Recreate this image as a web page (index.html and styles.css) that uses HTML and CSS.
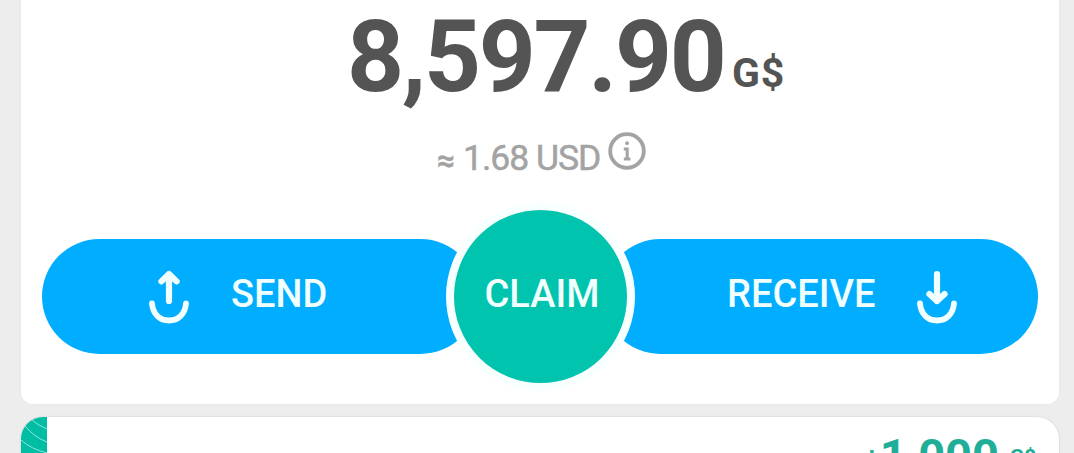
FILE: index.html
```html
<!DOCTYPE html>
<html lang="en">
<head>
<meta charset="utf-8">
<title>Wallet</title>
<link rel="stylesheet" href="styles.css">
</head>
<body>
<main class="wallet">
  <section class="balance-card">
    <div class="balance"><span class="amount">8,597.90</span><span class="unit">G$</span></div>
    <div class="fiat">
      <span class="approx">≈</span><span class="fiat-value">1.68 USD</span>
      <svg class="info" viewBox="0 0 38 38" fill="none" stroke="currentColor">
        <circle cx="19" cy="19" r="16.8" stroke-width="3.8"/>
        <circle cx="19" cy="11.2" r="1.9" fill="currentColor" stroke="none"/>
        <path d="M15.8 17H19.2V26.8M15.8 27H22.4" stroke-width="3"/>
      </svg>
    </div>
    <div class="actions">
      <button class="action send">
        <svg class="arrow" viewBox="0 0 40 54" fill="none" stroke="currentColor" stroke-linecap="round" stroke-linejoin="round">
          <path d="M20 31V5M12.4 11.4L20 4L27.6 11.4" stroke-width="6.2"/>
          <path d="M3 33.5C4 44.5 11 50.5 20 50.5S36 44.5 37 33.5" stroke-width="5.8"/>
        </svg>
        <span>SEND</span>
      </button>
      <button class="claim">CLAIM</button>
      <button class="action receive">
        <span>RECEIVE</span>
        <svg class="arrow" viewBox="0 0 40 54" fill="none" stroke="currentColor" stroke-linecap="round" stroke-linejoin="round">
          <path d="M20 4V31M12.4 24L20 31L27.6 24" stroke-width="6.2"/>
          <path d="M3 33.5C4 44.5 11 50.5 20 50.5S36 44.5 37 33.5" stroke-width="5.8"/>
        </svg>
      </button>
    </div>
  </section>
  <section class="feed-card">
    <svg class="stripe" viewBox="0 0 26 36" fill="none" stroke="#8ce8d8" stroke-width="1">
      <path d="M10 2Q16 8 26 12M4 9Q13 20 26 25M0 23Q10 32 26 36"/>
    </svg>
    <div class="feed-amount"><span class="plus">+</span><span class="feed-value">1,000</span><span class="feed-unit">G$</span></div>
  </section>
</main>
</body>
</html>
```
FILE: styles.css
```css
* { box-sizing: border-box; }
body {
  margin: 0;
  height: 453px;
  overflow: hidden;
  background: #ededed;
  font-family: Roboto, sans-serif;
}
.wallet {
  display: flex;
  flex-direction: column;
  gap: 13px;
  height: 453px;
  padding: 0 15px 0 21px;
  overflow: hidden;
}
.balance-card {
  flex: none;
  height: 404px;
  background: #fff;
  border-radius: 0 0 12px 12px;
  box-shadow: 0 0 2px #e4e4e4;
}
.balance {
  display: flex;
  align-items: flex-start;
  height: 122px;
  padding-left: 326px;
  color: #545454;
  font-weight: 700;
  white-space: nowrap;
}
.amount {
  width: 385px;
  font-size: 99.5px;
  line-height: 115px;
  letter-spacing: -2.3px;
}
.unit {
  padding-top: 49px;
  font-size: 41px;
  line-height: 48px;
  letter-spacing: 0.8px;
}
.fiat {
  display: flex;
  height: 87px;
  padding-left: 416px;
  color: #a3a3a3;
  font-size: 35.5px;
  line-height: 72px;
  white-space: nowrap;
  -webkit-text-stroke: 0.5px currentColor;
}
.approx {
  width: 26px;
  padding-top: 3px;
  font-size: 31px;
  font-weight: 700;
}
.fiat-value {
  width: 145px;
  letter-spacing: -1px;
}
.info {
  width: 38px;
  height: 38px;
  margin-top: 10px;
}
.actions {
  display: flex;
  align-items: center;
  height: 175px;
  padding: 0 21px;
}
button {
  border: 0;
  margin: 0;
  color: #f2ffff;
  font: 500 38px/44px Roboto, sans-serif;
}
.action {
  display: flex;
  align-items: center;
  flex: none;
  height: 115px;
  border-radius: 58px;
  background: #00adff;
}
.send { width: 436px; padding: 0 0 5px 107px; gap: 42px; }
.receive { width: 435px; padding: 0 0 5px 124px; gap: 42px; }
.arrow { flex: none; width: 40px; height: 54px; margin-top: 6px; }
.claim {
  z-index: 1;
  flex: none;
  width: 189px;
  height: 189px;
  margin: 0 -32px;
  padding: 0 0 5px 3px;
  border: 8px solid #f8ffff;
  border-radius: 50%;
  background: #00c4ae;
}
.feed-card {
  display: flex;
  flex: none;
  justify-content: space-between;
  height: 60px;
  background: #fff;
  border-radius: 22px 22px 0 0;
  box-shadow: 0 0 2px #c5c5c5;
  overflow: hidden;
}
.stripe {
  width: 26px;
  height: 36px;
  background: #00bda3;
}
.feed-amount {
  display: flex;
  padding-right: 23px;
  color: #20ae98;
  font-weight: 700;
  white-space: nowrap;
}
.plus { padding-top: 25px; font-size: 25px; line-height: 30px; }
.feed-value { width: 131px; padding: 11px 0 0 1px; font-size: 47px; line-height: 56px; }
.feed-unit { padding-top: 28px; font-size: 21px; line-height: 24px; }
```
